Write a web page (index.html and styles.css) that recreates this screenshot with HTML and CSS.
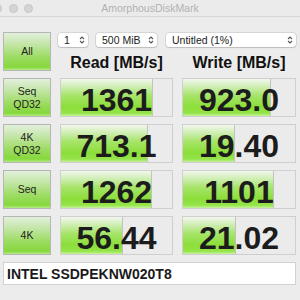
FILE: index.html
```html
<!DOCTYPE html>
<html lang="en">
<head>
  <meta charset="UTF-8" />
  <title>AmorphousDiskMark</title>
  <meta name="viewport" content="width=device-width, initial-scale=1.0" />
  <link rel="stylesheet" href="styles.css">
</head>
<body>
  <div class="window">
    <div class="titlebar">
      <div class="lights">
        <span class="light"></span>
        <span class="light"></span>
        <span class="light"></span>
      </div>
      <div class="title">AmorphousDiskMark</div>
    </div>

    <div class="bench">
      <div class="test-btn">All</div>
      <div class="top">
        <div class="controls">
          <div class="field spin">1
            <svg class="chev" viewBox="0 0 6 10"><polyline points="1,4 3,2 5,4" /><polyline points="1,6 3,8 5,6" /></svg>
          </div>
          <div class="field size">500 MiB
            <svg class="chev" viewBox="0 0 6 10"><polyline points="1,4 3,2 5,4" /><polyline points="1,6 3,8 5,6" /></svg>
          </div>
          <div class="field drive">Untitled (1%)
            <svg class="chev" viewBox="0 0 6 10"><polyline points="1,4 3,2 5,4" /><polyline points="1,6 3,8 5,6" /></svg>
          </div>
        </div>
        <div class="heads">
          <div>Read [MB/s]</div>
          <div>Write [MB/s]</div>
        </div>
      </div>

      <div class="test-btn">Seq<br>QD32</div>
      <div class="cell"><div class="fill" style="width: 83%"></div><span class="num">1361</span></div>
      <div class="cell"><div class="fill" style="width: 79%"></div><span class="num">923.0</span></div>

      <div class="test-btn">4K<br>QD32</div>
      <div class="cell"><div class="fill" style="width: 78%"></div><span class="num">713.1</span></div>
      <div class="cell"><div class="fill" style="width: 46%"></div><span class="num">19.40</span></div>

      <div class="test-btn">Seq</div>
      <div class="cell"><div class="fill" style="width: 82%"></div><span class="num">1262</span></div>
      <div class="cell"><div class="fill" style="width: 81%"></div><span class="num">1101</span></div>

      <div class="test-btn">4K</div>
      <div class="cell"><div class="fill" style="width: 56%"></div><span class="num">56.44</span></div>
      <div class="cell"><div class="fill" style="width: 47%"></div><span class="num">21.02</span></div>

      <div class="device">INTEL SSDPEKNW020T8</div>
    </div>
  </div>
</body>
</html>
```

FILE: styles.css
```css
* { box-sizing: border-box; }

html, body {
  margin: 0;
  padding: 0;
  background: #ececec;
  font-family: "Liberation Sans", Arial, sans-serif;
  color: #1e1e1e;
  overflow: hidden;
}

.window {
  width: 300px;
  height: 300px;
}

/* title bar */
.titlebar {
  height: 17px;
  display: grid;
  grid-template-columns: 1fr auto 1fr;
  align-items: center;
  background: #ebebeb;
  border-bottom: 1px solid #d7d7d7;
}

.lights {
  display: flex;
  gap: 6.5px;
  margin-left: -7px;
}

.light {
  width: 9px;
  height: 9px;
  border-radius: 50%;
  background: #d4d4d4;
  border: 1px solid #c6c6c6;
}

.title {
  font-size: 10.5px;
  color: #b2b2b2;
}

/* benchmark grid */
.bench {
  display: grid;
  grid-template-columns: 48px 113px 114px;
  grid-template-rows: repeat(5, 39px) 23px;
  column-gap: 9px;
  row-gap: 7px;
  padding: 15px 3px 0;
}

.test-btn {
  display: flex;
  align-items: center;
  justify-content: center;
  text-align: center;
  font-size: 10.5px;
  line-height: 13px;
  color: #222;
  border: 1px solid #b6b6b6;
  background: linear-gradient(#e3f0dc 0%, #c4e6a8 30%, #9edc64 65%, #86d83c 92%, #b4ea84 100%);
}

.top {
  grid-column: 2 / 4;
  display: flex;
  flex-direction: column;
  justify-content: space-between;
}

.controls {
  display: flex;
  gap: 8px;
  margin: 1px 0 0 -2px;
}

.field {
  height: 14px;
  display: flex;
  align-items: center;
  justify-content: space-between;
  padding: 0 3px 0 6px;
  font-size: 10.5px;
  color: #222;
  background: #fff;
  border-radius: 3px;
  box-shadow: 0 0 0 0.5px rgba(0, 0, 0, 0.18), 0 1px 1px rgba(0, 0, 0, 0.12);
}

.spin { width: 30px; }
.size { width: 61px; }
.drive { width: 130px; margin-left: 1px; }

.chev {
  width: 6px;
  height: 10px;
  fill: none;
  stroke: #555;
  stroke-width: 1.1;
}

.heads {
  display: grid;
  grid-template-columns: 113px 114px;
  column-gap: 9px;
  text-align: center;
  font-size: 16px;
  font-weight: bold;
  line-height: 16px;
  color: #111;
}

.cell {
  display: grid;
  background: #ebebeb;
  border: 1px solid #cfcfcf;
}

.fill,
.num {
  grid-area: 1 / 1;
}

.fill {
  height: 100%;
  border-right: 1px solid #c2c2c2;
  background: linear-gradient(#f2f7ee 0%, #cdeeb0 22%, #a6e468 45%, #8cde3a 75%, #94e448 92%, #c6f29c 100%);
}

.num {
  justify-self: center;
  align-self: end;
  font-size: 32px;
  font-weight: bold;
  line-height: 31px;
  color: #1c1c1c;
}

.device {
  grid-column: 1 / -1;
  display: flex;
  align-items: center;
  padding-left: 3px;
  font-size: 14px;
  font-weight: bold;
  color: #1a1a1a;
  background: #fff;
  border: 1px solid #d2d2d2;
}
```
